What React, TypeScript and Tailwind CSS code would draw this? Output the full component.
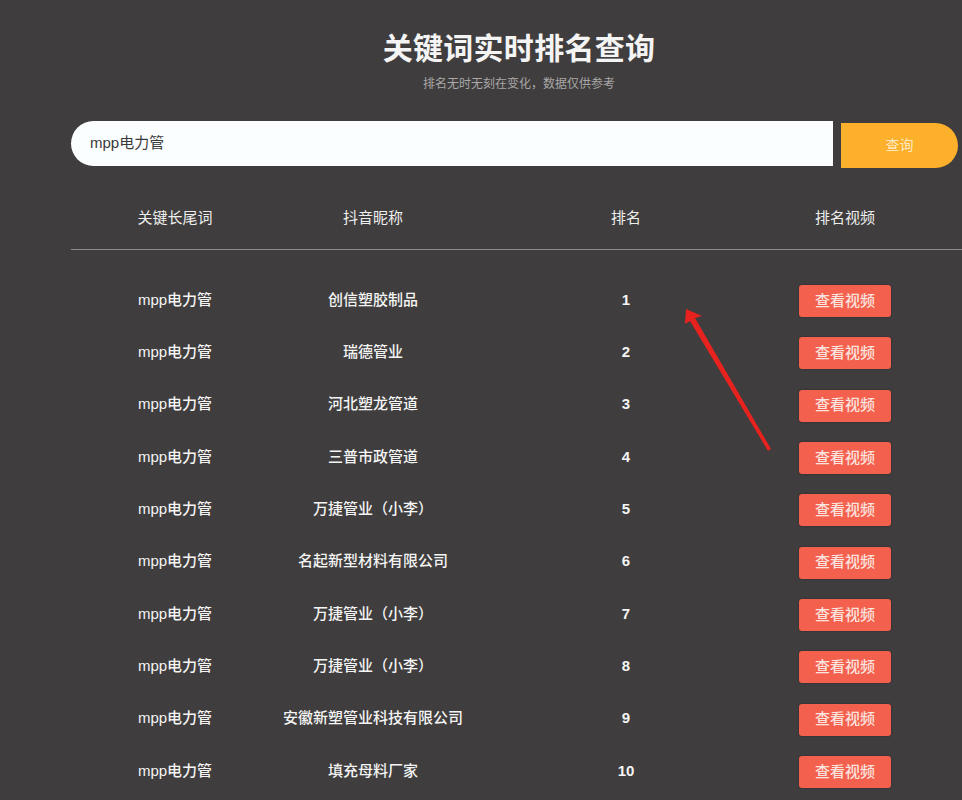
import React from "react";

const rows = [
  { name: "创信塑胶制品", rank: 1 },
  { name: "瑞德管业", rank: 2 },
  { name: "河北塑龙管道", rank: 3 },
  { name: "三普市政管道", rank: 4 },
  { name: "万捷管业（小李）", rank: 5 },
  { name: "名起新型材料有限公司", rank: 6 },
  { name: "万捷管业（小李）", rank: 7 },
  { name: "万捷管业（小李）", rank: 8 },
  { name: "安徽新塑管业科技有限公司", rank: 9 },
  { name: "填充母料厂家", rank: 10 },
];

const font = {
  fontFamily: '"Liberation Sans", "Noto Sans CJK SC", sans-serif',
};

export default function App() {
  return (
    <div
      className="relative h-[800px] w-[962px] overflow-hidden bg-[#3f3d3d] text-[#f2f2f2]"
      style={font}
    >
      <div className="pl-[76px] pt-[31px] text-center">
        <h1 className="text-[30px] font-bold leading-[36px] tracking-[0.3px] text-[#f4f4f4]">
          关键词实时排名查询
        </h1>
        <p className="mt-[9px] text-[12px] leading-[16px] text-[#a9a7a7]">
          排名无时无刻在变化，数据仅供参考
        </p>
      </div>

      <div className="mt-[29px] flex items-start pl-[71px]">
        <div className="flex h-[45px] w-[762px] items-center rounded-l-full rounded-r-[3px] bg-[#fbfefe] pl-[19px] text-[15px] text-[#3a3a3a]">
          mpp电力管
        </div>
        <button className="ml-[8px] mt-[2px] h-[45px] w-[117px] rounded-l-[4px] rounded-r-full bg-[#fdb02b] text-[14px] text-[#fde9c0]">
          查询
        </button>
      </div>

      <div className="ml-[71px] mt-[28px]">
        <div className="grid h-[54px] grid-cols-[208px_188px_318px_120px] items-center border-b border-[#8c8a8a] pb-[8px] text-[15px] text-[#eeeeee]">
          <div className="text-center">关键长尾词</div>
          <div className="text-center">抖音昵称</div>
          <div className="text-center">排名</div>
          <div className="text-center">排名视频</div>
        </div>

        <div className="pt-[24px]">
          {rows.map((r, i) => (
            <div
              key={i}
              className="grid h-[52.3px] grid-cols-[208px_188px_318px_120px] items-center text-[15px] font-medium text-[#f4f4f4]"
            >
              <div className="text-center">mpp电力管</div>
              <div className="whitespace-nowrap text-center">{r.name}</div>
              <div className="text-center font-bold">{r.rank}</div>
              <div className="flex justify-center">
                <button className="mt-[2px] h-[32px] w-[92px] rounded-[3px] bg-[#f4604e] text-[15px] text-[#fbe3df] shadow-[0_0_2px_rgba(0,0,0,0.4)]">
                  查看视频
                </button>
              </div>
            </div>
          ))}
        </div>
      </div>

      <svg
        className="pointer-events-none absolute left-0 top-0"
        width="962"
        height="800"
        viewBox="0 0 962 800"
      >
        <polygon
          points="686,309 702,316 695,318 771,449 768,451 690,321 685,324"
          fill="#e8231f"
        />
      </svg>
    </div>
  );
}
